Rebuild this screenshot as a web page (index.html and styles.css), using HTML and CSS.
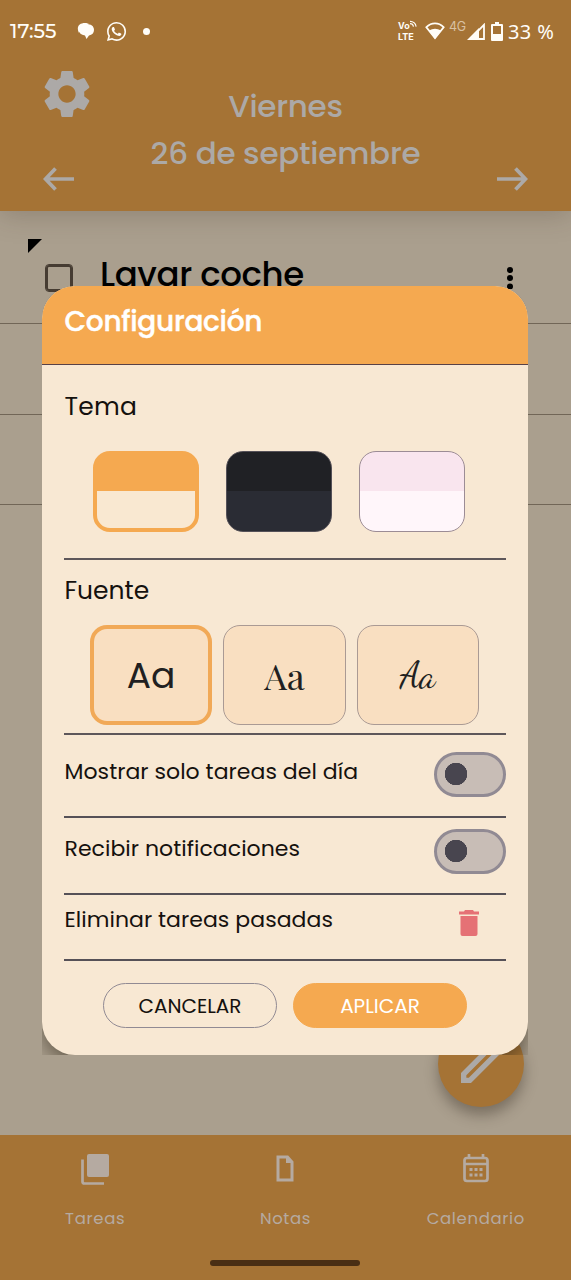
FILE: index.html
```html
<!DOCTYPE html>
<html lang="es">
<head>
<meta charset="utf-8">
<title>Configuración</title>
<link rel="stylesheet" href="styles.css">
</head>
<body>
<div class="app">
  <header class="header">
    <div class="status">
      <span class="clock">17:55</span>
      <svg class="chat" viewBox="0 0 18 18" width="18" height="18"><path d="M2 11C-1 5 2 1 8 1h4L4 4zM9 2c5 0 8 2 8 6 0 3-2 5-5 5.500L9.500 17 8 13.500C4 13 2 11 2 8s3-6 7-6z"/></svg>
      <svg class="whats" viewBox="0 0 24 24" width="23" height="23"><path d="M12.040 2c-5.460 0-9.910 4.450-9.910 9.910 0 1.750.46 3.450 1.320 4.950L2.050 22l5.250-1.380c1.450.79 3.080 1.210 4.740 1.210 5.460 0 9.910-4.450 9.910-9.910 0-2.650-1.030-5.140-2.900-7.010A9.820 9.820 0 0 0 12.040 2m.01 1.670c2.200 0 4.260.86 5.820 2.420a8.230 8.230 0 0 1 2.410 5.830c0 4.540-3.700 8.230-8.240 8.230-1.480 0-2.930-.39-4.190-1.150l-.3-.17-3.120.82.83-3.040-.2-.32a8.190 8.190 0 0 1-1.260-4.380c.01-4.540 3.700-8.240 8.250-8.240M8.530 7.330c-.16 0-.43.06-.66.31-.22.25-.87.86-.87 2.070 0 1.220.89 2.390 1 2.560.14.17 1.760 2.670 4.250 3.730.59.27 1.050.42 1.410.53.59.19 1.130.16 1.560.1.480-.07 1.460-.6 1.670-1.180.21-.58.21-1.070.15-1.180-.07-.1-.23-.16-.48-.27-.25-.14-1.470-.74-1.690-.82-.23-.08-.37-.12-.56.12-.16.25-.64.81-.78.97-.15.17-.29.19-.53.07-.26-.13-1.060-.39-2-1.230-.74-.66-1.230-1.470-1.380-1.720-.12-.24-.01-.39.11-.5.11-.11.27-.29.37-.44.13-.14.17-.25.25-.41.080-.17.04-.31-.02-.43-.06-.11-.56-1.350-.77-1.840-.2-.48-.4-.42-.56-.43-.14 0-.3-.01-.47-.01z"/></svg>
      <i class="dot"></i>
      <span class="volte"><span class="vo">Vo<svg viewBox="0 0 8 8" width="7" height="7"><path d="M0 1.500a7 7 0 0 1 7 6M0 4.200a4 4 0 0 1 4 3.300" class="line thin"/></svg></span><span>LTE</span></span>
      <svg class="wifi" viewBox="0 0 20 18" width="20" height="18"><path d="M1.400 5.200C6.500.2 13.500.2 18.600 5.200L10 16z" class="line w15"/><path d="M4 8.500q6-3.500 12 0L10 17z"/></svg>
      <span class="net">4G</span>
      <svg class="signal" viewBox="0 0 18 17" width="18" height="17"><path d="M17 1.800V16H3z" class="line w15"/><path d="M0 17 12 5v12z"/></svg>
      <svg class="battery" viewBox="0 0 12 19" width="12" height="19"><path d="M4 0h4v2h3q1 0 1 1v15q0 1-1 1H1q-1 0-1-1V3q0-1 1-1h3zM2 4v8h8V4z" fill-rule="evenodd"/></svg>
      <span class="percent">33 %</span>
    </div>
    <div class="datebar">
      <div class="side">
        <svg class="gear" viewBox="2 2 20 20" width="48" height="48"><path d="M19.140 12.940c.04-.3.06-.61.06-.94 0-.32-.02-.64-.07-.94l2.030-1.580a.49.49 0 0 0 .12-.61l-1.920-3.320a.488.488 0 0 0-.59-.22l-2.390.96c-.5-.38-1.030-.7-1.620-.94l-.36-2.540a.484.484 0 0 0-.48-.41h-3.840c-.24 0-.43.17-.47.41l-.36 2.540c-.59.24-1.130.57-1.620.94l-2.390-.96c-.22-.08-.47 0-.59.22L2.740 8.870c-.12.21-.08.47.12.61l2.030 1.580c-.05.3-.09.63-.09.94s.02.64.07.94l-2.030 1.580a.49.49 0 0 0-.12.61l1.920 3.320c.12.22.37.29.59.22l2.390-.96c.5.38 1.030.7 1.620.94l.36 2.540c.05.24.24.41.48.41h3.840c.24 0 .44-.17.47-.41l.36-2.540c.59-.24 1.130-.56 1.620-.94l2.390.96c.22.08.47 0 .59-.22l1.920-3.320c.12-.22.07-.47-.12-.61l-2.010-1.580zM12 15.600c-1.980 0-3.600-1.620-3.600-3.600s1.620-3.600 3.600-3.600 3.600 1.620 3.600 3.600-1.620 3.600-3.600 3.600z"/></svg>
        <svg viewBox="0 0 32 24" width="32" height="24"><path d="M31 12H3M12.500 1.500 2.500 12l10 10.500" class="line w3"/></svg>
      </div>
      <div class="date"><div class="day">Viernes</div><div class="full">26 de septiembre</div></div>
      <div class="side right">
        <svg viewBox="0 0 32 24" width="32" height="24"><path d="M1 12h28M19.500 1.500l10 10.500-10 10.500" class="line w3"/></svg>
      </div>
    </div>
  </header>

  <main class="list">
    <div class="row">
      <svg class="flag" viewBox="0 0 14 14" width="14" height="14"><path d="M0 0h14L0 14z"/></svg>
      <i class="check"></i>
      <span class="task">Lavar coche</span>
      <svg class="more" viewBox="0 0 6 22" width="6" height="22"><circle cx="3" cy="3" r="3"/><circle cx="3" cy="11" r="3"/><circle cx="3" cy="19.500" r="3"/></svg>
    </div>
    <div class="row"></div>
    <div class="row"></div>
    <div class="fab"><svg viewBox="3 3 18 18" width="48" height="48"><path d="M14.060 9.020l.92.92L5.920 19H5v-.92zM17.660 3c-.25 0-.51.1-.7.29l-1.830 1.830 3.750 3.750 1.830-1.830a1 1 0 0 0 0-1.410l-2.340-2.340a1 1 0 0 0-.71-.29zm-3.600 3.190L3 17.250V21h3.750L17.810 9.940z"/></svg></div>
  </main>

  <nav class="nav">
    <div class="tab"><svg viewBox="0 0 28 32" width="28" height="32"><rect x="6" y="1" width="22" height="23" rx="2"/><path d="M1.500 6.500v22q0 2 2 2H23" class="line w25"/></svg><span>Tareas</span></div>
    <div class="tab"><svg viewBox="0 0 18 32" width="18" height="32"><path d="M2 4h9.500L16 9v18H2z" class="line w28"/><path d="M10 3v7h7z"/></svg><span>Notas</span></div>
    <div class="tab"><svg viewBox="0 0 26 32" width="26" height="32"><rect x="1.500" y="5" width="23" height="23" rx="2.500" class="line w25"/><path d="M6 1v4M20 1v4M2 11h22" class="line w25"/><path d="M6.500 15h3v3h-3zm5 0h3v3h-3zm5 0h3v3h-3zm-10 5.500h3v3h-3zm5 0h3v3h-3zm5 0h3v3h-3z"/></svg><span>Calendario</span></div>
    <i class="home"></i>
  </nav>
</div>

<div class="overlay">
  <section class="dialog">
    <h1 class="title">Configuración</h1>
    <div class="content">
      <div class="group theme">
        <h2>Tema</h2>
        <div class="swatches"><i class="swatch orange"></i><i class="swatch dark"></i><i class="swatch pink"></i></div>
      </div>
      <div class="group font">
        <h2>Fuente</h2>
        <div class="fonts"><div class="choice chosen">Aa</div><div class="choice serif">Aa</div><div class="choice script">Aa</div></div>
      </div>
      <div class="option first"><span>Mostrar solo tareas del día</span><i class="toggle"></i></div>
      <div class="option second"><span>Recibir notificaciones</span><i class="toggle"></i></div>
      <div class="option third"><span>Eliminar tareas pasadas</span><svg class="trash" viewBox="0 0 20 26" width="20" height="26"><path d="M6 0h8l1 1.500h5v3H0v-3h5zM1.500 6h17v18q0 2-2 2h-13q-2 0-2-2z"/></svg></div>
      <div class="actions"><button class="btn">CANCELAR</button><button class="btn apply">APLICAR</button></div>
    </div>
  </section>
</div>
</body>
</html>
```
FILE: styles.css
```css
* { box-sizing: border-box; }
body {
  margin: 0;
  width: 571px;
  height: 1280px;
  overflow: hidden;
  position: relative;
  font-family: Poppins, Inter, "Open Sans", sans-serif;
  font-feature-settings: "cv11";
  white-space: nowrap;
}
svg { display: block; flex: none; fill: currentColor; }
i { display: block; flex: none; }
.line { fill: none; stroke: currentColor; }
.thin { stroke-width: 1.3; }
.w15 { stroke-width: 1.8; }
.w25 { stroke-width: 2.7; }
.w28 { stroke-width: 3; }
.w3 { stroke-width: 3.7; }

.app { height: 1280px; display: flex; flex-direction: column; background: #aa9f8e; }
.header { height: 211px; flex: none; background: #a57335; color: #aca9a7; box-shadow: 0 3px 26px rgba(60, 45, 30, .25); z-index: 1; }

.status { height: 62px; padding: 0 17px 0 10px; display: flex; align-items: center; color: #fffdf8; }
.clock { width: 67px; font: 500 20px Montserrat, Poppins, sans-serif; letter-spacing: 0; }
.whats { margin-left: 10px; }
.dot { width: 7px; height: 7px; margin-left: 15px; border-radius: 50%; background: currentColor; }
.volte { margin-left: auto; display: flex; flex-direction: column; font: 700 9px Inter, sans-serif; line-height: 11px; width: 27px; }
.vo, .volte > span { height: 11px; }
.vo { display: flex; }
.net { margin: -10px 1px 0 4px; width: 17px; font: 12.500px Inter, sans-serif; letter-spacing: -.3px; color: #d9c1a3; }
.battery { margin-left: 6px; }
.percent { margin-left: 5px; width: 46px; font: 20px "Noto Sans", sans-serif; letter-spacing: .4px; }

.datebar { height: 149px; padding: 0 43px; display: flex; justify-content: space-between; }
.side { width: 48px; padding: 8px 0 20px; display: flex; flex-direction: column; justify-content: space-between; }
.right { justify-content: flex-end; align-items: flex-end; }
.date { padding-top: 21px; text-align: center; font-size: 31px; line-height: 47px; font-weight: 500; }
.day { letter-spacing: -.3px; }
.full { letter-spacing: -.25px; }

.list { flex: 1; position: relative; color: #000; }
.row { height: 90.500px; border-bottom: 1.500px solid #716657; display: flex; padding: 28px 58px 0 28px; }
.row:first-child { height: 113px; }
.check { width: 26px; height: 26px; margin: 26px 0 0 4px; border: 2px solid #463c32; outline: .5px solid #463c32; border-radius: 3px; }
.task { margin: 13px 0 0 28px; font-size: 34px; line-height: 44px; font-weight: 500; letter-spacing: -.4px; }
.more { margin: 28px 0 0 auto; }
.fab { position: absolute; left: 438px; bottom: 28px; width: 86px; height: 86px; border-radius: 50%; background: #a57335; color: #aca9a7; display: grid; place-items: center; padding: 0 0 10px 8px; box-shadow: 0 8px 14px rgba(50, 40, 30, .4); }

.nav { height: 145px; flex: none; background: #a57335; color: #b5aaa1; display: grid; grid-template-columns: repeat(3, 1fr); grid-template-rows: 125px 6px; }
.tab { padding-top: 18px; display: flex; flex-direction: column; align-items: center; gap: 24px; font-size: 16.5px; line-height: 20px; letter-spacing: .65px; }
.home { grid-column: 1 / 4; justify-self: center; width: 150px; height: 6px; border-radius: 3px; background: #492e14; }

.overlay { position: absolute; left: 42px; top: 286px; width: 486px; height: 769px; overflow: hidden; border-radius: 32px 32px 0 0; }
.dialog { height: 769px; border-radius: 33px; background: #f8e8d3; box-shadow: 0 8px 18px rgba(45, 35, 20, .5); color: #15110e; }
.title { margin: 0; height: 79px; padding: 16px 22.500px 0; border-radius: 33px 33px 0 0; border-bottom: 1.500px solid #584147; background: #f5a950; color: #fff; font-size: 28px; line-height: 40px; font-weight: 500; letter-spacing: -.3px; -webkit-text-stroke: .4px #fff; }
.content { padding: 0 22px; }
.group, .option { border-bottom: 2px solid #5e575a; }
.group h2 { margin: 0; font-size: 25px; line-height: 34px; font-weight: 400; padding-left: .5px; }
.theme { height: 195px; padding-top: 25px; }
.theme h2 { letter-spacing: .2px; }
.font { height: 175px; padding-top: 14px; }
.swatches { display: flex; gap: 27px; padding: 27px 0 0 29px; }
.swatch { width: 106px; height: 81px; border: 1px solid #9c8c95; border-radius: 17px; }
.orange { border: 4px solid #f5a950; background: linear-gradient(#f5a950 0 36px, #f9e8d1 36px); }
.dark { border-color: #555158; background: linear-gradient(#202125 0 39px, #2a2c34 39px); }
.pink { background: linear-gradient(#f9e5ee 0 39px, #fff6fa 39px); }
.fonts { display: flex; gap: 11px; padding: 17px 0 0 26px; }
.choice { width: 122.300px; height: 100px; border: 1px solid #aa9a94; border-radius: 17px; background: #f9dfc1; color: #211f21; display: grid; place-items: center; font-size: 36px; }
.chosen { border: 4px solid #f1a957; }
.serif { font-family: "Playfair Display", "Liberation Serif", serif; font-size: 36px; }
.script { font-family: "Dancing Script", "Liberation Serif", cursive; font-size: 36px; }

.option { display: flex; justify-content: space-between; font-size: 22px; line-height: 30px; letter-spacing: .04px; border-color: #565157; }
.option span { padding-left: .5px; }
.first { height: 83px; padding-top: 17px; }
.first span { padding-top: 5px; }
.second { height: 77px; padding-top: 11px; }
.second span { padding-top: 5px; }
.third { height: 66px; padding: 10px 27px 0 0; }
.trash { margin-top: 5px; color: #e57175; }
.toggle { width: 72px; height: 45px; border: 3px solid #918a93; border-radius: 23px; background: radial-gradient(circle at 19px 19px, #48454f 11px, #c8bdb6 11.500px); }
.actions { display: flex; gap: 16px; padding: 22px 0 0 39px; }
.btn { width: 174px; height: 45px; padding: 0; border: 1.500px solid #918a93; border-radius: 23px; background: transparent; color: #15110e; font: 20px Poppins, Inter, sans-serif; }
.apply { border-color: #f5a950; background: #f5a950; color: #fff; }
```
